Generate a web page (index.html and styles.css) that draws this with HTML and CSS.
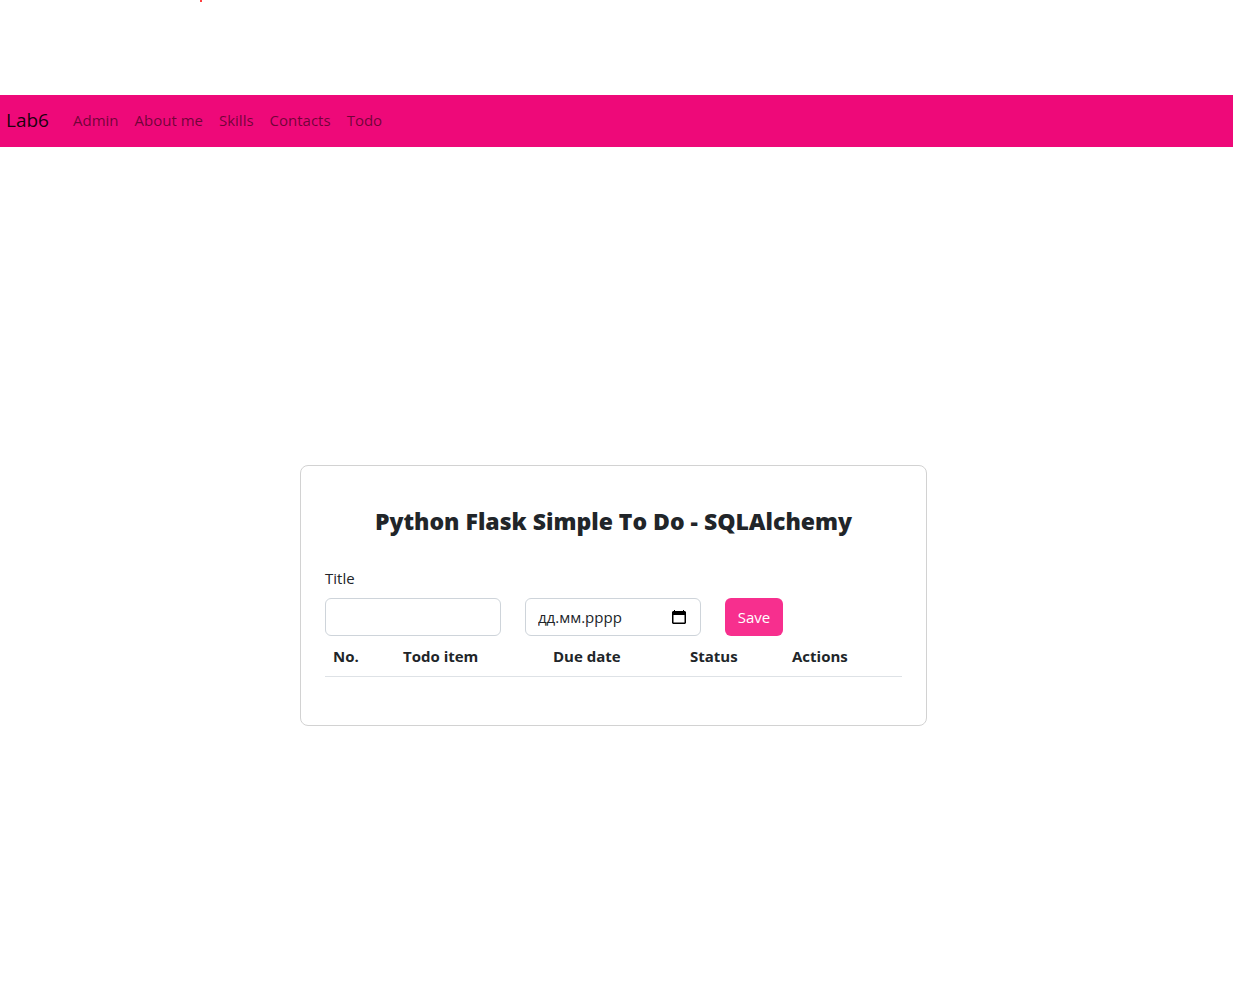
FILE: index.html
```html
<!DOCTYPE html>
<html lang="en">
<head>
  <meta charset="utf-8">
  <meta name="viewport" content="width=device-width, initial-scale=1">
  <title>Lab6</title>
  <link rel="stylesheet" href="styles.css">
</head>
<body>
  <header class="page-top"><span class="dot"></span></header>
  <nav class="navbar">
    <a class="brand" href="#">Lab6</a>
    <a class="nav-link" href="#">Admin</a>
    <a class="nav-link" href="#">About me</a>
    <a class="nav-link" href="#">Skills</a>
    <a class="nav-link" href="#">Contacts</a>
    <a class="nav-link" href="#">Todo</a>
  </nav>
  <main class="content">
    <section class="card">
      <h1 class="card-title">Python Flask Simple To Do - SQLAlchemy</h1>
      <form class="todo-form">
        <label class="form-label" for="title">Title</label>
        <div class="form-row">
          <input class="control" id="title" type="text">
          <div class="control date-field">
            <input class="date-input" type="text" placeholder="дд.мм.рррр" aria-label="Due date">
            <button class="picker" type="button" aria-label="Open calendar">
              <svg width="14" height="16" viewBox="0 0 14 16" aria-hidden="true">
                <path d="M2 1h1v1h8V1h1v1h1l1 1v11l-1 1H1l-1-1V3l1-1h1zM1.500 6v7.500h11V6z" fill="#000" fill-rule="evenodd"/>
              </svg>
            </button>
          </div>
          <button class="save" type="button">Save</button>
        </div>
      </form>
      <table class="todo-table">
        <colgroup>
          <col class="col-no"><col class="col-item"><col class="col-due"><col class="col-status"><col>
        </colgroup>
        <thead>
          <tr><th scope="col">No.</th><th scope="col">Todo item</th><th scope="col">Due date</th><th scope="col">Status</th><th scope="col">Actions</th></tr>
        </thead>
      </table>
    </section>
  </main>
</body>
</html>
```
FILE: styles.css
```css
* {
  box-sizing: border-box;
}

body {
  margin: 0;
  background: #fff;
  color: #212529;
  font: 15px/24px "Segoe UI", "Open Sans", "Noto Sans", sans-serif;
}

.page-top {
  position: relative;
  height: 95px;
}

.dot {
  position: absolute;
  top: 0;
  left: 200px;
  width: 2px;
  height: 2px;
  border-radius: 1px;
  background: #f00;
}

.navbar {
  display: flex;
  align-items: center;
  gap: 16px;
  height: 52px;
  padding: 0 6px 3px;
  background: #ee0979;
}

.brand {
  margin-right: 8px;
  color: rgba(0, 0, 0, 0.9);
  font-size: 19px;
  text-decoration: none;
}

.nav-link {
  color: rgba(0, 0, 0, 0.55);
  text-decoration: none;
}

.content {
  display: flex;
  justify-content: center;
  padding: 318px 6px 24px 0;
}

.card {
  width: 100%;
  max-width: 627px;
  padding: 40px 24px 48px;
  border: 1px solid #d2d2d2;
  border-radius: 8px;
}

.card-title {
  margin: 0 0 30px;
  font-size: 23px;
  font-weight: 800;
  line-height: 30px;
  text-align: center;
}

.form-label {
  display: block;
  margin-bottom: 8px;
}

.form-row {
  display: flex;
  gap: 24px;
}

.control {
  width: 176px;
  height: 38px;
  padding: 0 12px;
  border: 1px solid #ced4da;
  border-radius: 6px;
  background: #fff;
  color: #212529;
  font: inherit;
}

.date-field {
  display: flex;
  align-items: center;
  justify-content: space-between;
}

.date-input {
  width: 112px;
  padding: 0;
  border: 0;
  background: none;
  color: inherit;
  font: inherit;
}

.date-input::placeholder {
  color: #212529;
  opacity: 1;
}

.picker {
  display: flex;
  padding: 0 2px;
  border: 0;
  background: none;
}

.save {
  width: 58px;
  height: 38px;
  padding: 0;
  border: 0;
  border-radius: 6px;
  background: #f72f8e;
  color: #fff;
  font: inherit;
}

.todo-table {
  width: 100%;
  border-collapse: collapse;
  table-layout: fixed;
}

.todo-table th {
  padding: 8px;
  border-bottom: 1px solid #dee2e6;
  font-weight: 700;
  text-align: left;
}

.col-no {
  width: 70px;
}

.col-item {
  width: 150px;
}

.col-due {
  width: 137px;
}

.col-status {
  width: 102px;
}
```
